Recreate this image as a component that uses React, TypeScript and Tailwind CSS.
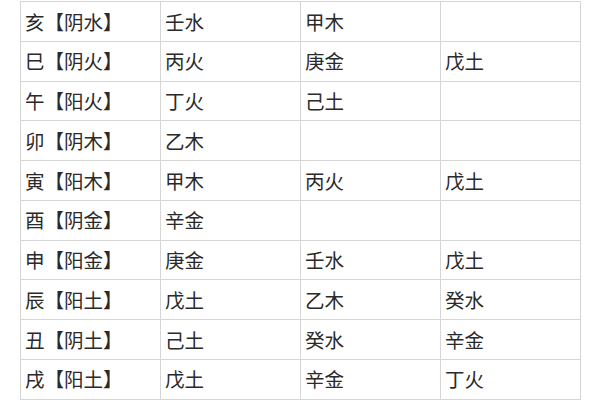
const rows: string[][] = [
  ["亥【阴水】", "壬水", "甲木", ""],
  ["巳【阴火】", "丙火", "庚金", "戊土"],
  ["午【阳火】", "丁火", "己土", ""],
  ["卯【阴木】", "乙木", "", ""],
  ["寅【阳木】", "甲木", "丙火", "戊土"],
  ["酉【阴金】", "辛金", "", ""],
  ["申【阳金】", "庚金", "壬水", "戊土"],
  ["辰【阳土】", "戊土", "乙木", "癸水"],
  ["丑【阴土】", "己土", "癸水", "辛金"],
  ["戌【阳土】", "戊土", "辛金", "丁火"],
];

export default function App() {
  return (
    <div
      className="h-[400px] w-[600px] overflow-hidden bg-white pl-5 pt-px text-[#2a2a2a]"
      style={{ fontFamily: '"Noto Sans CJK SC", "Noto Sans", sans-serif' }}
    >
      <table className="w-[560px] table-fixed border-collapse">
        <tbody>
          {rows.map((row, i) => (
            <tr key={i} className="h-[39.75px]">
              {row.map((cell, j) => (
                <td
                  key={j}
                  className="w-[140px] border border-[#d6d6d6] px-[4px] text-[19.5px] leading-none"
                >
                  {cell}
                </td>
              ))}
            </tr>
          ))}
        </tbody>
      </table>
    </div>
  );
}
